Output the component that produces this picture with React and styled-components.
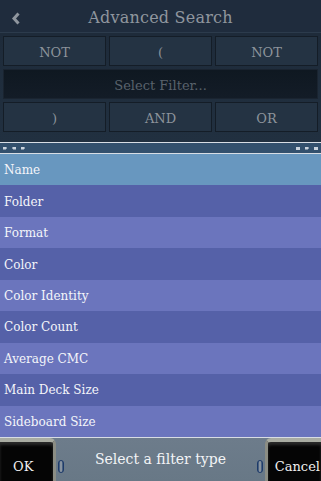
import React from 'react';
import styled, { createGlobalStyle } from 'styled-components';

const Global = createGlobalStyle`
  html, body {
    margin: 0;
    padding: 0;
    background: #1e2b3a;
  }
  body {
    font-family: 'DejaVu Serif', 'Liberation Serif', serif;
  }
`;

const Screen = styled.div`
  width: 321px;
  height: 481px;
  display: flex;
  flex-direction: column;
  overflow: hidden;
  background: #1e2b3a;
`;

const Header = styled.header`
  height: 33px;
  display: flex;
  align-items: center;
  justify-content: center;
  position: relative;
  background: #1f2c3d;
  border-bottom: 1px solid #2c3b4c;
  box-sizing: border-box;
`;

const Back = styled.div`
  position: absolute;
  left: 10px;
  top: 10px;
  width: 12px;
  height: 14px;
`;

const Title = styled.h1`
  margin: 2px 0 0;
  font-weight: normal;
  font-size: 16px;
  color: #8f969e;
  letter-spacing: 0.2px;
`;

const Controls = styled.div`
  display: flex;
  flex-direction: column;
  gap: 3px;
  padding: 3px 3px 0;
  height: 109px;
  box-sizing: border-box;
  background: linear-gradient(#1e2b3a, #213040);
`;

const ButtonRow = styled.div`
  display: grid;
  grid-template-columns: 1fr 1fr 1fr;
  gap: 3px;
`;

const OpButton = styled.div`
  height: 30px;
  box-sizing: border-box;
  border: 1px solid #141d27;
  background: #243343;
  display: flex;
  align-items: center;
  justify-content: center;
  padding-top: 2px;
  font-size: 13px;
  color: #8d949b;
`;

const FilterField = styled.div`
  height: 30px;
  box-sizing: border-box;
  background: linear-gradient(#0f1821, #131c27);
  border: 1px solid #1a2430;
  display: flex;
  align-items: center;
  justify-content: center;
  padding-top: 2px;
  font-size: 13px;
  color: #59626c;
`;

const Splitter = styled.div`
  height: 12px;
  box-sizing: border-box;
  border-top: 1px solid #d8dde4;
  border-bottom: 1px solid #d8dde4;
  background: #33506d;
  display: flex;
  align-items: center;
  justify-content: space-between;
  padding: 0 3px;
`;

const Dots = styled.div`
  display: flex;
  gap: 5px;
`;

const Dot = styled.span`
  width: 4px;
  height: 3px;
  background: #c9d2dc;
  clip-path: ${p =>
    p.$shape === 'right'
      ? 'polygon(0 0, 70% 0, 100% 50%, 70% 100%, 0 100%)'
      : p.$shape === 'left'
      ? 'polygon(30% 0, 100% 0, 100% 100%, 30% 100%, 0 50%)'
      : 'none'};
`;

const List = styled.div`
  display: flex;
  flex-direction: column;
  height: 283px;
`;

const Item = styled.div`
  flex: 1;
  display: flex;
  align-items: center;
  padding: 1px 0 0 4px;
  font-size: 12px;
  color: #f4f5fa;
  background: ${p => (p.$selected ? '#6897bf' : p.$odd ? '#6b75bd' : '#5561a8')};
`;

const Footer = styled.footer`
  flex: 1;
  border-top: 1px solid #d8dde4;
  display: flex;
  align-items: stretch;
  background: linear-gradient(#6d7c8b, #687886);
`;

const SideButton = styled.div`
  width: ${p => p.$w}px;
  background: #050505;
  display: flex;
  align-items: center;
  justify-content: ${p => (p.$right ? 'flex-end' : 'flex-start')};
  padding: 10px ${p => (p.$right ? '1px' : '0')} 0 ${p => (p.$right ? '0' : '13px')};
  box-sizing: border-box;
  font-size: 13px;
  color: #f0f0f0;
  border-top: 4px solid #a9aca2;
  ${p =>
    p.$right
      ? `border-left: 3px solid #8b8d84; border-top-left-radius: 6px;`
      : `border-right: 3px solid #8b8d84; border-top-right-radius: 6px;`}
  box-shadow: inset 0 3px 3px rgba(255,255,255,0.15);
`;

const Knob = styled.span`
  width: 4px;
  height: 11px;
  margin-top: 22px;
  border-radius: 3px;
  background: linear-gradient(90deg, #28466f, #a8adb0 50%, #28466f);
  border: 1px solid #1d3a6a;
`;

const Center = styled.div`
  flex: 1;
  display: flex;
  align-items: flex-start;
  justify-content: space-between;
  padding: 0 2px;
`;

const Prompt = styled.div`
  align-self: center;
  margin-top: -1px;
  font-size: 14px;
  color: #f2f4f6;
`;

const filters = [
  'Name',
  'Folder',
  'Format',
  'Color',
  'Color Identity',
  'Color Count',
  'Average CMC',
  'Main Deck Size',
  'Sideboard Size',
];

export default function App() {
  return (
    <Screen>
      <Global />
      <Header>
        <Back>
          <svg width="12" height="14" viewBox="0 0 12 14">
            <path d="M8.5 2.5 L4 7.5 L8.5 12.5" fill="none" stroke="#8f969e" strokeWidth="3" />
          </svg>
        </Back>
        <Title>Advanced Search</Title>
      </Header>
      <Controls>
        <ButtonRow>
          <OpButton>NOT</OpButton>
          <OpButton>(</OpButton>
          <OpButton>NOT</OpButton>
        </ButtonRow>
        <FilterField>Select Filter...</FilterField>
        <ButtonRow>
          <OpButton>)</OpButton>
          <OpButton>AND</OpButton>
          <OpButton>OR</OpButton>
        </ButtonRow>
      </Controls>
      <Splitter>
        <Dots>
          <Dot $shape="right" />
          <Dot $shape="left" />
          <Dot $shape="right" />
        </Dots>
        <Dots>
          <Dot />
          <Dot $shape="right" />
          <Dot />
        </Dots>
      </Splitter>
      <List>
        {filters.map((f, i) => (
          <Item key={f} $selected={i === 0} $odd={i % 2 === 0}>
            {f}
          </Item>
        ))}
      </List>
      <Footer>
        <SideButton $w={56}>OK</SideButton>
        <Center>
          <Knob />
          <Prompt>Select a filter type</Prompt>
          <Knob />
        </Center>
        <SideButton $w={56} $right>Cancel</SideButton>
      </Footer>
    </Screen>
  );
}
